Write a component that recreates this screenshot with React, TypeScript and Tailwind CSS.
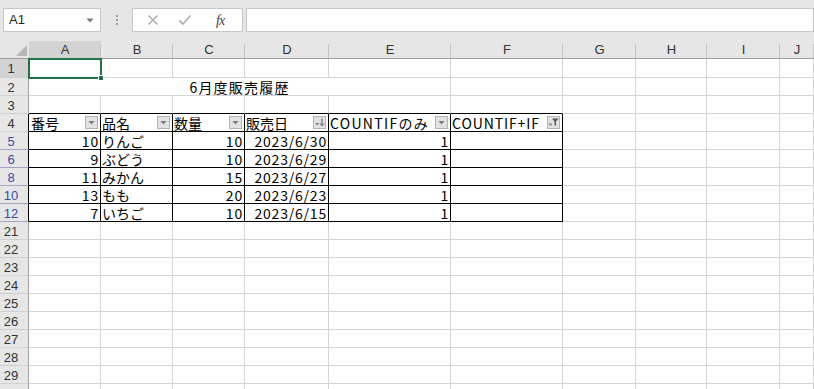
import React from "react";

const cols = [
	{ k: "A", w: "w-[72px]" },
	{ k: "B", w: "w-[72px]" },
	{ k: "C", w: "w-[72px]" },
	{ k: "D", w: "w-[84px]" },
	{ k: "E", w: "w-[122px]" },
	{ k: "F", w: "w-[112px]" },
	{ k: "G", w: "w-[73px]" },
	{ k: "H", w: "w-[71px]" },
	{ k: "I", w: "w-[73px]" },
	{ k: "J", w: "flex-1" },
];

const data = [
	{ r: 5, no: "10", name: "りんご", qty: "10", date: "2023/6/30", c: "1" },
	{ r: 6, no: "9", name: "ぶどう", qty: "10", date: "2023/6/29", c: "1" },
	{ r: 8, no: "11", name: "みかん", qty: "15", date: "2023/6/27", c: "1" },
	{ r: 10, no: "13", name: "もも", qty: "20", date: "2023/6/23", c: "1" },
	{ r: 12, no: "7", name: "いちご", qty: "10", date: "2023/6/15", c: "1" },
];

const font = "font-['Noto_Sans_CJK_JP','Noto_Sans',sans-serif]";

// small grey dropdown button of the table header
const FilterBtn = ({ kind = "plain" }: { kind?: "plain" | "sort" | "filter" }) => (
	<div className="ml-auto mr-[2px] w-[13px] h-[13px] shrink-0 bg-[#e2e2e2] border border-[#b3b3b3] flex items-center justify-center">
		<svg width="11" height="11" viewBox="0 0 11 11">
			{kind === "plain" && <path d="M2.5 4 h6 l-3 3.5z" fill="#7b7b7b" />}
			{kind === "sort" && (
				<>
					<path d="M1 6 h4 l-2 2.5z" fill="#7b7b7b" />
					<path d="M8 1.5 v7 M6 6.5 l2 2.2 l2 -2.2" stroke="#555" strokeWidth="1" fill="none" />
				</>
			)}
			{kind === "filter" && (
				<>
					<path d="M0.5 6.5 h4 l-2 2.5z" fill="#7b7b7b" />
					<path d="M4 1.5 h6.5 l-2.5 3 v4.5 l-1.5 -1 v-3.5z" fill="#555" />
				</>
			)}
		</svg>
	</div>
);

const RowHead = ({ n, blue, sel, dark, h = "h-[18px]" }: { n?: number; blue?: boolean; sel?: boolean; dark?: boolean; h?: string }) => (
	<div
		className={`w-[29px] ${h} shrink-0 border-r border-b flex items-center ${
			sel ? "bg-[#d3d3d3]" : "bg-[#e6e6e6]"
		} ${dark ? "border-r-black" : "border-r-[#9e9e9e]"} ${blue ? "border-b-[#a4a4c8]" : "border-b-[#d0d0d0]"}`}
	>
		<span className={`w-[22px] text-center text-[13px] leading-none pt-[1px] font-['Liberation_Sans',sans-serif] ${blue ? "text-[#3a4ba0]" : "text-[#333]"}`}>
			{n}
		</span>
	</div>
);

const Cell = ({ w, children, cls = "" }: { w: string; children?: React.ReactNode; cls?: string }) => (
	<div className={`${w} shrink-0 h-full border-r border-b border-[#d4d4d4] flex items-center whitespace-nowrap ${cls}`}>
		{children}
	</div>
);

const EmptyRow = ({ n, h, sel }: { n?: number; h?: string; sel?: boolean }) => (
	<div className={`flex ${h ?? "h-[18px]"}`}>
		<RowHead n={n} h={h} sel={sel} />
		{cols.map((c) => (
			<Cell key={c.k} w={c.w} />
		))}
	</div>
);

export default function App() {
	const tb = "border-r-black border-b-black";
	const txt = "leading-[16px]";
	const num = "pr-[1px] leading-[16px] tracking-[0.8px]";
	return (
		<div className={`w-[814px] h-[389px] overflow-hidden bg-white relative ${font} text-[14px] text-black`}>
			{/* formula bar */}
			<div className="h-[41px] bg-[#e6e6e6] flex items-start pt-[8px]">
				<div className="ml-[3px] w-[98px] h-[24px] bg-white border border-[#c6c6c6] flex items-center pl-[5px] pr-[6px]">
					<span className="text-[13px] font-['Liberation_Sans',sans-serif] text-[#222]">A1</span>
					<svg className="ml-auto" width="8" height="5" viewBox="0 0 8 5">
						<path d="M0.5 0.5 h7 l-3.5 4z" fill="#7a7a7a" />
					</svg>
				</div>
				<div className="w-[31px] h-[24px] flex flex-col items-center justify-center gap-[2px]">
					<span className="w-[2px] h-[2px] bg-[#9a9a9a]" />
					<span className="w-[2px] h-[2px] bg-[#9a9a9a]" />
					<span className="w-[2px] h-[2px] bg-[#9a9a9a]" />
				</div>
				<div className="w-[111px] h-[24px] bg-white border border-[#c6c6c6] flex items-center">
					<svg className="ml-[14px]" width="12" height="12" viewBox="0 0 12 12">
						<path d="M1.5 1.5 L10.5 10.5 M10.5 1.5 L1.5 10.5" stroke="#b0b0b0" strokeWidth="1.6" />
					</svg>
					<svg className="ml-[19px]" width="14" height="12" viewBox="0 0 14 12">
						<path d="M1.5 6.5 L5 10 L12.5 1.5" stroke="#b0b0b0" strokeWidth="1.8" fill="none" />
					</svg>
					<span className="ml-[24px] text-[14px] italic font-['Liberation_Serif',serif] text-[#444] tracking-[-1px]">
						fx
					</span>
				</div>
				<div className="ml-[3px] flex-1 h-[24px] bg-white border border-[#c6c6c6]" />
			</div>

			{/* column headers */}
			<div className="flex h-[18px] bg-[#e6e6e6] border-b border-[#9e9e9e]">
				<div className="w-[29px] shrink-0 h-full flex items-end justify-end pr-[2px] pb-[2px]">
					<svg width="11" height="11" viewBox="0 0 11 11">
						<path d="M11 0 V11 H0z" fill="#b8b8b8" />
					</svg>
				</div>
				{cols.map((c, i) => (
					<div
						key={c.k}
						className={`${c.w} shrink-0 h-full flex items-center justify-center relative ${
							i === 0 ? "bg-[#d3d3d3]" : ""
						}`}
					>
						<span className="text-[13px] leading-none font-['Liberation_Sans',sans-serif] text-[#333]">{c.k}</span>
						<span className="absolute right-0 top-[3px] bottom-0 w-px bg-[#c4c4c4]" />
					</div>
				))}
			</div>

			{/* rows */}
			<EmptyRow n={1} h="h-[19px]" sel />

			<div className="flex h-[18px]">
				<RowHead n={2} />
				<Cell w="w-[422px]" cls="justify-center">
					<span className={`${txt} tracking-[1.2px]`}>6月度販売履歴</span>
				</Cell>
				{cols.slice(5).map((c) => (
					<Cell key={c.k} w={c.w} />
				))}
			</div>

			<div className="flex h-[18px]">
				<RowHead n={3} />
				{cols.map((c, i) => (
					<Cell key={c.k} w={c.w} cls={i < 6 ? "border-b-black" : ""} />
				))}
			</div>

			<div className="flex h-[18px]">
				<RowHead n={4} dark />
				<Cell w="w-[72px]" cls={tb}>
					<span className={`pl-[2px] ${txt}`}>番号</span>
					<FilterBtn />
				</Cell>
				<Cell w="w-[72px]" cls={tb}>
					<span className={`pl-[1px] ${txt}`}>品名</span>
					<FilterBtn />
				</Cell>
				<Cell w="w-[72px]" cls={tb}>
					<span className={`pl-[1px] ${txt}`}>数量</span>
					<FilterBtn />
				</Cell>
				<Cell w="w-[84px]" cls={tb}>
					<span className={`pl-[1px] ${txt}`}>販売日</span>
					<FilterBtn kind="sort" />
				</Cell>
				<Cell w="w-[122px]" cls={tb}>
					<span className={`pl-[1px] ${txt} tracking-[1.3px]`}>COUNTIFのみ</span>
					<FilterBtn />
				</Cell>
				<Cell w="w-[112px]" cls={tb}>
					<span className={`pl-[1px] ${txt} tracking-[0.9px]`}>COUNTIF+IF</span>
					<FilterBtn kind="filter" />
				</Cell>
				{cols.slice(6).map((c) => (
					<Cell key={c.k} w={c.w} />
				))}
			</div>

			{data.map((d) => (
				<div key={d.r} className="flex h-[18px]">
					<RowHead n={d.r} blue dark />
					<Cell w="w-[72px]" cls={`${tb} justify-end`}>
						<span className={num}>{d.no}</span>
					</Cell>
					<Cell w="w-[72px]" cls={tb}>
						<span className={`pl-[1px] ${txt}`}>{d.name}</span>
					</Cell>
					<Cell w="w-[72px]" cls={`${tb} justify-end`}>
						<span className={num}>{d.qty}</span>
					</Cell>
					<Cell w="w-[84px]" cls={`${tb} justify-end`}>
						<span className={num}>{d.date}</span>
					</Cell>
					<Cell w="w-[122px]" cls={`${tb} justify-end`}>
						<span className={num}>{d.c}</span>
					</Cell>
					<Cell w="w-[112px]" cls={tb} />
					{cols.slice(6).map((c) => (
						<Cell key={c.k} w={c.w} />
					))}
				</div>
			))}

			{[21, 22, 23, 24, 25, 26, 27, 28, 29].map((n) => (
				<EmptyRow key={n} n={n} />
			))}
			<EmptyRow />

			{/* active cell A1 */}
			<div className="absolute left-[28px] top-[58px] w-[74px] h-[21px] border-2 border-[#217346] pointer-events-none">
				<div className="absolute -right-[4px] -bottom-[4px] w-[6px] h-[6px] bg-[#217346] border border-white" />
			</div>
		</div>
	);
}
